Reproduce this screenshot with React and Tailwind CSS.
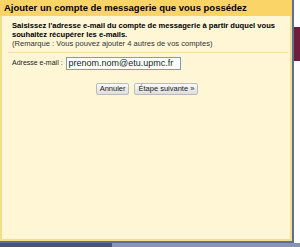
export default function App() {
  return (
    <div className="relative w-[300px] h-[247px] overflow-hidden bg-white" style={{ fontFamily: '"Liberation Sans", Arial, sans-serif' }}>
      {/* background page strip on right */}
      <div className="absolute left-[294px] top-0 w-[6px] h-[247px] bg-white">
        <div className="h-[27px]" />
        <div className="h-[34px] bg-[#6e1d3c]" />
      </div>
      <div className="absolute left-0 top-[243px] w-[112px] h-[4px] bg-[#4b5373]" />
      <div className="absolute left-[112px] top-[243px] w-[188px] h-[4px] bg-[#8a93b0]" />
      <div className="absolute left-0 top-0 w-[294px] h-[243px] border-r-2 border-b-2 border-[#5d6f96]">
        <div className="w-full h-full border-2 border-t-0 border-[#f3de8c] bg-[#fff6d6] flex flex-col">
          <div className="h-[16px] bg-[#fbd468] flex items-center text-[9.5px] font-bold text-black leading-none -mx-[2px] pl-[4px]">
            Ajouter un compte de messagerie que vous possédez
          </div>
          <div className="ml-[6px] mr-[2px] mt-[5px] pb-[4px] border-b border-[#f3e2a0] pl-[4px] text-[7.6px] leading-[9px] text-black">
            <div className="font-bold">Saisissez l'adresse e-mail du compte de messagerie à partir duquel vous souhaitez récupérer les e-mails.</div>
            <div className="text-[#333]">(Remarque : Vous pouvez ajouter 4 autres de vos comptes)</div>
          </div>
          <div className="flex items-center mt-[4px] pl-[10px] text-[7px] text-[#222]">
            <span>Adresse e-mail :</span>
            <div className="ml-[3px] w-[115px] h-[13px] bg-white border border-[#7f9db9] flex items-center px-[2px] text-[9px] text-[#222]">prenom.nom@etu.upmc.fr</div>
          </div>
          <div className="flex justify-center gap-[5px] mt-[13px] ml-[2px]">
            <div className="h-[12px] px-[3px] flex items-center text-[7.5px] leading-none text-[#222] border border-[#bbbbbb] rounded-[2px] bg-linear-to-b from-[#fafafa] to-[#dedede]">Annuler</div>
            <div className="h-[12px] px-[3px] flex items-center text-[7.5px] leading-none text-[#222] border border-[#bbbbbb] rounded-[2px] bg-linear-to-b from-[#fafafa] to-[#dedede]">Étape suivante »</div>
          </div>
        </div>
      </div>
    </div>
  );
}
